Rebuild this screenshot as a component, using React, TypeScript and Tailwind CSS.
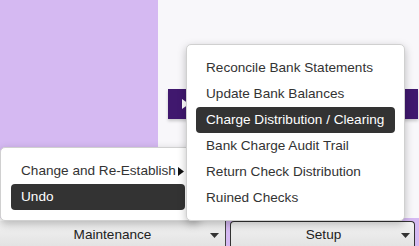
import React from 'react';

const SETUP_ITEMS = [
  'Reconcile Bank Statements',
  'Update Bank Balances',
  'Charge Distribution / Clearing',
  'Bank Charge Audit Trail',
  'Return Check Distribution',
  'Ruined Checks',
];

const DownCaret = () => (
  <svg width="9" height="5" viewBox="0 0 9 5" className="shrink-0 mt-[3px]">
    <path d="M0 0 L9 0 L4.5 5 Z" fill="#333" />
  </svg>
);

const MenuItem = ({ label, active, sub }: { label: string; active?: boolean; sub?: boolean }) => (
  <div
    className={`h-[26px] flex items-center px-[10px] rounded-[4px] whitespace-nowrap ${
      active ? 'bg-[#333333] text-white' : 'text-[#333]'
    }`}
  >
    <span>{label}</span>
    {sub && (
      <svg width="6" height="9" viewBox="0 0 6 9" className="ml-[2px] shrink-0">
        <path d="M0 0 L6 4.5 L0 9 Z" fill="#111" />
      </svg>
    )}
  </div>
);

const App = () => {
  return (
    <div
      className="relative w-[419px] h-[246px] overflow-hidden flex flex-col text-[13.6px]"
      style={{ fontFamily: '"Liberation Sans", Arial, sans-serif' }}
    >
      <div className="flex h-[218px]">
        <div className="w-[158px] bg-[#d5b9f2]" />
        <div className="flex-1 bg-[#f8f7fa] pt-[89px] pl-[10px] pr-[1px]">
          <div className="h-[30px] bg-[#40186e] flex items-center pl-[14px] shadow-[0_2px_3px_rgba(0,0,0,0.2)]">
            <svg width="7" height="10" viewBox="0 0 7 10">
              <path d="M0 0 L7 5 L0 10 Z" fill="#fff" />
            </svg>
          </div>
        </div>
      </div>

      <div className="flex h-[28px]">
        <div className="mt-[3px] w-[226px] border-r border-[#444] bg-gradient-to-b from-[#f3f3f3] to-[#e3e3e3] flex items-center pr-[6px]">
          <span className="flex-1 text-center text-[#222] pl-[15px] pt-[3px]">Maintenance</span>
          <DownCaret />
        </div>
        <div className="flex-1 bg-[#d5b9f2] pt-[3px] pl-[4px] pr-[4px]">
          <div className="h-full border border-b-0 border-[#333] rounded-t-[4px] bg-gradient-to-b from-[#f3f3f3] to-[#e3e3e3] flex items-center pr-[4px]">
            <span className="flex-1 text-center text-[#222] pl-[15px] pt-[3px]">Setup</span>
            <DownCaret />
          </div>
        </div>
      </div>

      <div className="absolute left-0 top-[147px] w-[200px] h-[74px] bg-white border border-[#d0d0d0] rounded-[5px] shadow-[0_3px_8px_rgba(0,0,0,0.25)] py-[10px] pl-[10px] pr-[14px]">
        <MenuItem label="Change and Re-Establish" sub />
        <MenuItem label="Undo" active />
      </div>

      <div className="absolute left-[186px] top-[44px] w-[219px] h-[177px] bg-white border border-[#d0d0d0] rounded-[5px] shadow-[0_3px_8px_rgba(0,0,0,0.25)] py-[10px] px-[9px]">
        {SETUP_ITEMS.map((item) => (
          <MenuItem key={item} label={item} active={item === 'Charge Distribution / Clearing'} />
        ))}
      </div>
    </div>
  );
};

export default App;
